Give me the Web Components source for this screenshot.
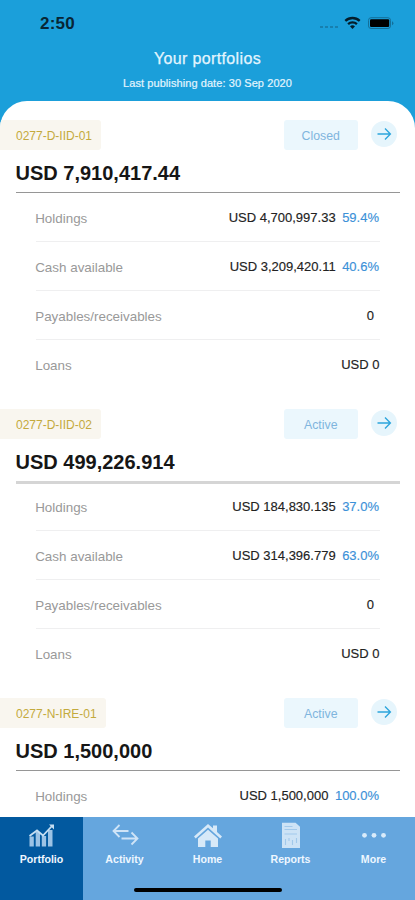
<!DOCTYPE html>
<html lang="en">
<head>
<meta charset="utf-8">
<title>Your portfolios</title>
<style>
html,body{margin:0;height:100%;overflow:hidden}
body{font-family:"Liberation Sans",Arial,sans-serif;background:#1b9fda}
</style>
</head>
<body>
<portfolio-app></portfolio-app>
<script>
const define = (name, html) => customElements.define(name, class extends HTMLElement {
  constructor() {
    super();
    const t = document.createElement('template');
    t.innerHTML = html;
    this.attachShadow({ mode: 'open' }).append(t.content.cloneNode(true));
  }
});

define('status-bar', `
<style>
:host{display:flex;justify-content:space-between;height:46px;box-sizing:border-box;padding:14px 20px 0 40px;color:#082635}
time{font-size:17px;font-weight:700;line-height:19px;letter-spacing:.2px}
svg{display:block}
</style>
<time>2:50</time>
<svg width="76" height="20" viewBox="0 0 76 20">
  <g fill="#177fae"><rect x="1" y="12" width="3" height="2"/><rect x="6" y="12" width="3" height="2"/><rect x="11" y="12" width="3" height="2"/><rect x="16" y="12" width="3" height="2"/></g>
  <g fill="none" stroke="#041d2a" stroke-width="2.3"><path d="M26.3 6.9a10.4 10.4 0 0 1 14.4 0"/><path d="M29.1 10.1a6.4 6.4 0 0 1 8.8 0"/></g>
  <path d="M33.5 15l-2.5-2.7a3.7 3.7 0 0 1 5 0z" fill="#041d2a"/>
  <rect x="49.5" y="3.7" width="22" height="10.8" rx="2.6" fill="none" stroke="#136f99"/>
  <rect x="51" y="5.2" width="19.2" height="7.8" rx="1.2" fill="#000"/>
  <path d="M73 7.2v4q1.4-.6 1.4-2t-1.4-2" fill="#136f99"/>
</svg>`);

define('page-heading', `
<style>
:host{display:flex;flex-direction:column;align-items:center;height:55px;color:#e3f5fe}
h1{font-size:16px;line-height:20px;margin:3px 0 0;font-weight:400;letter-spacing:.36px;-webkit-text-stroke:.25px}
p{font-size:11px;line-height:14px;margin:7px 0 0;letter-spacing:.08px;-webkit-text-stroke:.2px}
</style>
<h1><slot name="title"></slot></h1><p><slot></slot></p>`);

define('value-row', `
<style>
:host{display:flex;justify-content:space-between;height:49px;box-sizing:border-box;margin:0 35.5px;border-bottom:1.5px solid #efeff0;font-size:13px;line-height:16px;padding-top:17px;color:#222}
:host([last]){border-color:transparent}
:host([inset]) .v{margin-right:5.5px}
.l{font-size:13.4px;color:#999;padding-top:.5px;margin-left:-.3px}
.v{display:flex;gap:6.5px;-webkit-text-stroke:.15px}
:host([paired]) .v{margin-right:.5px}
::slotted(b){font-weight:400;color:#3c91d8}
</style>
<span class="l"><slot name="label"></slot></span><span class="v"><slot></slot></span>`);

define('portfolio-card', `
<style>
:host{display:block;height:289.1px}
.top{display:flex;height:30px}
.tag{box-sizing:border-box;height:30px;padding:0 9px 0 16px;background:#f9f6ef;border-radius:0 3px 3px 0;color:#c4aa3d;font-size:12px;line-height:32px}
.state{margin-left:auto;width:73.5px;background:#ebf7fd;border-radius:3px;color:#7fb5dd;font-size:12.3px;line-height:32px;text-align:center}
.go{margin:1px 18px 0 13.5px;width:26px;height:26px;border-radius:50%;background:#e6f5fc;display:block}
h2{margin:10.5px 0 0 15.5px;font-size:20px;line-height:24px;height:24px;color:#161616}
hr{margin:7px 15px 0 16px;border:0;height:1.5px;background:#969696}
:host([soft]) hr{height:3px;margin-bottom:-1.5px;background:#d5d5d5}
</style>
<div class="top"><span class="tag"><slot name="code"></slot></span><span class="state"><slot name="state"></slot></span>
<svg class="go" viewBox="0 0 26 26" fill="none" stroke="#2da5dc" stroke-width="1.35"><path d="M6.5 13h12.7M14 7.6l5.4 5.4-5.4 5.4"/></svg></div>
<h2><slot name="total"></slot></h2><hr><slot></slot>`);

define('nav-tab', `
<style>
:host{display:flex;flex:1;flex-direction:column;align-items:center;padding-top:4px;color:#eef7ff;font-size:10.6px;font-weight:700;line-height:14px}
:host([active]){background:#02599f}
.i{height:30px;margin-bottom:1px}
</style>
<span class="i"><slot name="icon"></slot></span><span><slot></slot></span>`);

define('tab-bar', `
<style>
:host{display:flex;position:absolute;left:0;right:0;bottom:0;height:83px;box-sizing:border-box;background:#65a6de}
.home{position:absolute;left:134px;width:148px;bottom:8px;height:4.5px;border-radius:2px;background:#000}
svg{display:block}
</style>
<nav-tab active><svg slot="icon" width="30" height="30" viewBox="0 0 30 30"><g fill="#9cc3e5"><path d="M2.5 15.5h4.3v10H2.5zM8.7 11H13v14.5H8.7zM14.8 15h4.3v10.5h-4.3zM21 9h4.5v16.5H21z"/></g><path d="M2.5 15l7.5-5.5 6 5 9-9.500" fill="none" stroke="#c5def2" stroke-width="1.8"/><path d="M22 3.500h5v5z" fill="#c5def2"/></svg>Portfolio</nav-tab>
<nav-tab><svg slot="icon" width="30" height="30" viewBox="0 0 30 30" fill="none" stroke="#cfe4f7" stroke-width="1.8"><path d="M18.5 10H4M9.5 4l-6 6 6 6M11.5 17.5H27M21.500 11.500l6 6-6 6"/></svg>Activity</nav-tab>
<nav-tab><svg slot="icon" width="30" height="30" viewBox="0 0 30 30" fill="#d7e9f8"><path d="M15 3l5 4.3V4.5h4V11l5 4.5-1.7 2L15 6.5 2.7 17.5 1 15.5z"/><path d="M5 17.5L15 8.7l10 8.8V26h-7.300v-6.500h-5.400V26H5z"/></svg>Home</nav-tab>
<nav-tab><svg slot="icon" width="30" height="30" viewBox="0 0 30 30"><path d="M6 1.8h13.5l4.500 4V27H6z" fill="#cde3f6"/><path d="M8.500 5.500h8M8.500 8.500h12.500M8.500 13h12.500M9.500 24v-6M13 20v-3M16.500 24v-5M20.500 22v-5" fill="none" stroke="#a2c9eb" stroke-width="1.100"/></svg>Reports</nav-tab>
<nav-tab><svg slot="icon" width="30" height="30" viewBox="0 0 30 30" fill="#d9ebfa"><circle cx="5.500" cy="14.300" r="2.400"/><circle cx="15" cy="14.300" r="2.400"/><circle cx="24.500" cy="14.300" r="2.400"/></svg>More</nav-tab>
<div class="home"></div>`);

const row = (label, value, pct, attrs = '') =>
  `<value-row ${attrs}${pct ? 'paired' : ''}><span slot="label">${label}</span><span>${value}</span>${pct ? `<b>${pct}</b>` : ''}</value-row>`;
const card = (code, state, total, h, hp, c, cp, soft = '') =>
  `<portfolio-card ${soft}><span slot="code">${code}</span><span slot="state">${state}</span><span slot="total">${total}</span>` +
  row('Holdings', h, hp) + (c ? row('Cash available', c, cp) + row('Payables/receivables', '0', '', 'inset') + row('Loans', 'USD 0', '', 'last') : '') + `</portfolio-card>`;

define('portfolio-app', `
<style>
:host{display:flex;flex-direction:column;position:relative;height:900px;width:415px;overflow:hidden;background:#1b9fda}
main{flex:1;min-height:0;overflow:hidden;background:#fff;border-radius:27px 27px 0 0;padding-top:19px}
</style>
<status-bar></status-bar>
<page-heading><span slot="title">Your portfolios</span>Last publishing date: 30 Sep 2020</page-heading>
<main>
${card('0277-D-IID-01', 'Closed', 'USD 7,910,417.44', 'USD 4,700,997.33', '59.4%', 'USD 3,209,420.11', '40.6%')}
${card('0277-D-IID-02', 'Active', 'USD 499,226.914', 'USD 184,830.135', '37.0%', 'USD 314,396.779', '63.0%', 'soft')}
${card('0277-N-IRE-01', 'Active', 'USD 1,500,000', 'USD 1,500,000', '100.0%')}
</main>
<tab-bar></tab-bar>`);
</script>
</body>
</html>
